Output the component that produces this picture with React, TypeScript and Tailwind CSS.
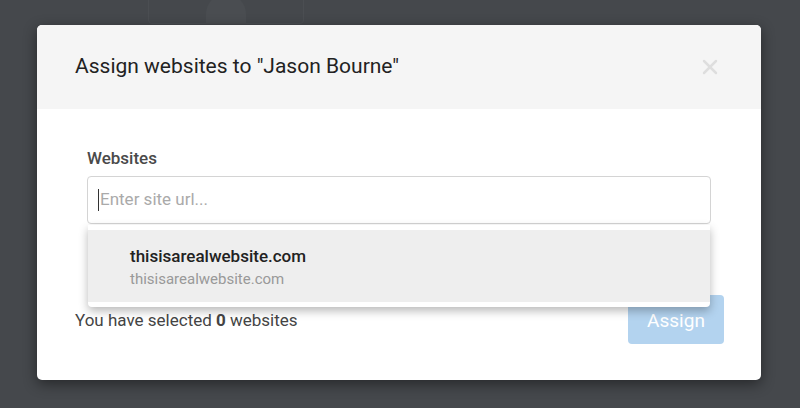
import { X } from 'lucide-react';

export default function App() {
  return (
    <div className="relative w-[800px] h-[408px] overflow-hidden bg-[#45484c] font-['Roboto',sans-serif]">
      {/* faint page content behind the overlay */}
      <div className="absolute left-[148px] top-[-20px] w-[156px] h-[44px] rounded border border-[#4b4e52]" />
      <div className="absolute left-[206px] top-[-6px] w-[40px] h-[30px] rounded-t-full bg-[#4a4d51]" />

      <div className="relative ml-[37px] mt-[25px] w-[724px] rounded-[5px] bg-white shadow-[0_4px_14px_rgba(0,0,0,0.45)]">
        {/* header */}
        <div className="flex h-[84px] items-center justify-between rounded-t-[5px] bg-[#f5f5f5] pl-[38px] pr-[39px]">
          <h2 className="text-[21px] text-[#222]">Assign websites to "Jason Bourne"</h2>
          <X className="h-[24px] w-[24px] text-[#dedede]" strokeWidth={2.5} />
        </div>

        {/* body */}
        <div className="pl-[38px] pr-[37px] pt-[39px] pb-[36px]">
          <div className="relative pl-[12px] pr-[13px]">
            <label className="block text-[17px] leading-[20px] font-medium text-[#4a4a4a]">Websites</label>
            <div className="mt-[8px] flex h-[48px] items-center rounded-[4px] border border-[#d4d4d4] bg-white px-[10px]">
              <span className="h-[22px] w-px bg-[#333]" />
              <span className="ml-[1px] text-[17px] text-[#aaa]">Enter site url...</span>
            </div>

            {/* suggestions dropdown */}
            <div className="absolute left-[13px] right-[14px] top-[77px] z-10 rounded-b-[4px] bg-white py-[5px] shadow-[0_4px_10px_rgba(0,0,0,0.28)]">
              <div className="flex h-[72px] flex-col justify-center bg-[#eeeeee] pl-[42px] pt-[2px]">
                <div className="text-[17px] font-medium leading-[22px] text-[#222]">thisisarealwebsite.com</div>
                <div className="mt-[2px] text-[15px] leading-[20px] text-[#999]">thisisarealwebsite.com</div>
              </div>
            </div>
          </div>

          <div className="mt-[71px] flex items-center justify-between">
            <p className="pt-[2px] text-[17px] text-[#444]">
              You have selected <span className="font-bold">0</span> websites
            </p>
            <button className="h-[49px] w-[96px] rounded-[4px] bg-[#b3d3ef] pt-[3px] text-[19px] text-white">Assign</button>
          </div>
        </div>
      </div>
    </div>
  );
}
